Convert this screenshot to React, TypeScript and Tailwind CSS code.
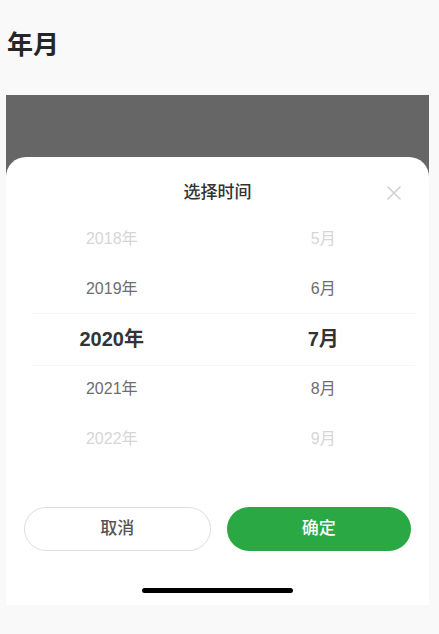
import React from "react";

const font = { fontFamily: '"Liberation Sans", "Noto Sans CJK SC", sans-serif' };

const years = ["2018年", "2019年", "2020年", "2021年", "2022年"];
const months = ["5月", "6月", "7月", "8月", "9月"];

function Column({ items }: { items: string[] }) {
  return (
    <div className="flex flex-1 flex-col items-center">
      {items.map((t, i) => {
        const sel = i === 2;
        const far = i === 0 || i === 4;
        return (
          <div
            key={t}
            className={
              "flex h-[50px] items-center justify-center " +
              (sel
                ? "text-[20px] font-bold text-[#333333]"
                : far
                ? "text-[16px] text-[#d6d6d6]"
                : "text-[16px] text-[#6e6e6e]")
            }
          >
            {t}
          </div>
        );
      })}
    </div>
  );
}

export default function App() {
  return (
    <div className="min-h-[634px] w-full bg-[#f9f9f9]" style={font}>
      <div className="h-[95px] pl-[7px] pt-[27px]">
        <div className="text-[26px] font-bold leading-[36px] text-[#262626]">年月</div>
      </div>
      <div className="mx-[6px] w-[423px] bg-[#666666] pt-[62px]">
        <div className="flex flex-col rounded-t-[20px] bg-white">
          <div className="relative flex h-[57px] items-start justify-center pt-[24px]">
            <div className="text-[17px] font-medium leading-[24px] text-[#333333]">选择时间</div>
            <svg
              className="absolute right-[27px] top-[28px]"
              width="16"
              height="16"
              viewBox="0 0 16 16"
              fill="none"
              stroke="#d0d0d0"
              strokeWidth="1.6"
              strokeLinecap="round"
            >
              <path d="M2 2 L14 14 M14 2 L2 14" />
            </svg>
          </div>
          <div className="relative flex h-[251px]">
            <div className="pointer-events-none absolute left-[26px] right-[14px] top-[99px] h-[53px] border-y border-[#f5f5f5]" />
            <Column items={years} />
            <Column items={months} />
          </div>
          <div className="flex gap-4 px-[18px] pt-[42px]">
            <button className="flex h-[44px] flex-1 items-center justify-center rounded-full border border-[#dddddd] bg-white text-[17px] font-medium text-[#555555]">
              取消
            </button>
            <button className="flex h-[44px] flex-1 items-center justify-center rounded-full bg-[#2aa844] text-[17px] font-medium text-white">
              确定
            </button>
          </div>
          <div className="flex h-[54px] items-start justify-center pt-[37px]">
            <div className="h-[5px] w-[151px] rounded-full bg-black" />
          </div>
        </div>
      </div>
    </div>
  );
}
